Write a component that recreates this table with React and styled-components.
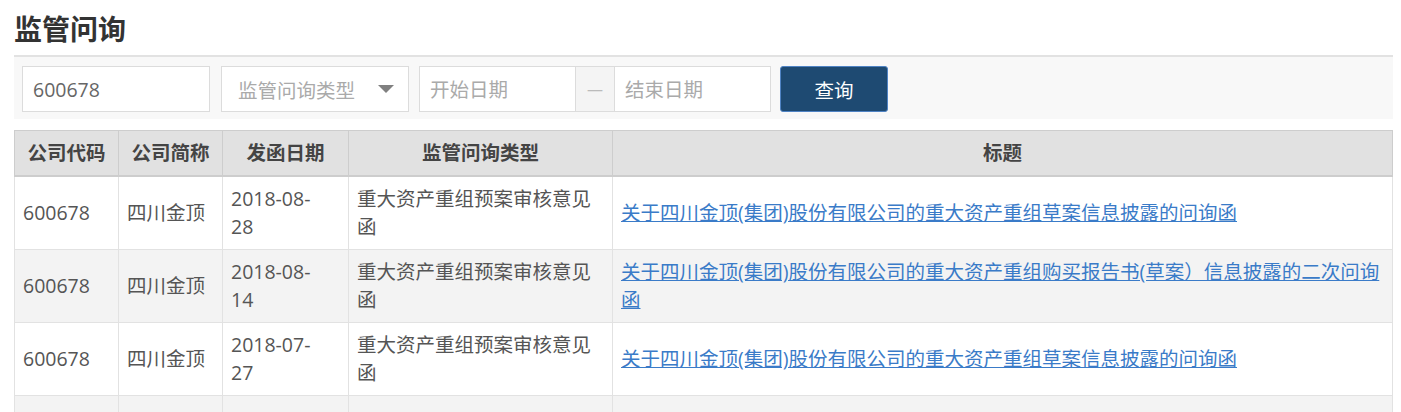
import React from 'react';
import styled, { createGlobalStyle } from 'styled-components';

const GlobalStyle = createGlobalStyle`
    body {
        margin: 0;
        background: #fff;
        font-family: "Open Sans", "Noto Sans CJK SC", sans-serif;
        color: #555;
    }
`;

const Page = styled.div`
    margin: 0 8px 0 14px;
`;

const Title = styled.h2`
    margin: 0;
    padding-top: 10px;
    height: 45px;
    line-height: 38px;
    font-size: 28px;
    font-weight: 700;
    color: #333;
`;

const FilterBar = styled.div`
    display: flex;
    align-items: center;
    border-top: 2px solid #e2e2e2;
    background-color: #f8f8f8;
    padding: 9px 8px 7px;
`;

const TextInput = styled.input`
    box-sizing: border-box;
    width: ${({ w }) => w}px;
    height: 46px;
    margin-right: ${({ gap }) => gap || 0}px;
    padding: 0 10px;
    border: 1px solid #dcdcdc;
    background: #fff;
    font-family: inherit;
    font-size: 19.5px;
    color: #666;
    outline: none;

    &::placeholder {
        color: #aaa;
    }
`;

const SelectBox = styled.div`
    box-sizing: border-box;
    width: 188px;
    height: 46px;
    margin-right: 10px;
    padding: 0 14px 0 16px;
    display: flex;
    align-items: center;
    justify-content: space-between;
    border: 1px solid #dcdcdc;
    background: #fff;
    font-size: 19.5px;
    color: #aaa;
`;

const Caret = styled.span`
    width: 0;
    height: 0;
    border-left: 8px solid transparent;
    border-right: 8px solid transparent;
    border-top: 8px solid #808080;
`;

const DateGroup = styled.div`
    display: flex;
    margin-right: 9px;
`;

const DateSep = styled.span`
    box-sizing: border-box;
    width: 38px;
    height: 46px;
    display: flex;
    align-items: center;
    justify-content: center;
    border-top: 1px solid #dcdcdc;
    border-bottom: 1px solid #dcdcdc;
    background: #f4f4f4;
    font-size: 16px;
    color: #bbb;
`;

const SearchButton = styled.button`
    box-sizing: border-box;
    width: 108px;
    height: 46px;
    border: 1px solid #4f83c4;
    border-radius: 3px;
    background-color: #1e4a72;
    color: #fff;
    font-family: inherit;
    font-size: 19.5px;
    cursor: pointer;
`;

const Table = styled.table`
    width: 100%;
    margin-top: 11px;
    border-collapse: collapse;
    table-layout: fixed;
    font-size: 19.5px;
    line-height: 28px;
`;

const Th = styled.th`
    width: ${({ w }) => (w ? `${w}px` : 'auto')};
    padding: 8px;
    background-color: #e1e1e1;
    border: 1px solid #cdcdcd;
    border-bottom-width: 2px;
    font-weight: 700;
    color: #444;
    text-align: center;
`;

const Tr = styled.tr`
    background-color: ${({ striped }) => (striped ? '#f3f3f3' : '#fff')};
`;

const Td = styled.td`
    padding: 8px;
    height: 56px;
    border: 1px solid #e2e2e2;
    vertical-align: middle;
    color: #555;
`;

const DateText = styled.span`
    display: inline-block;
    max-width: 86px;
`;

const TitleLink = styled.a`
    color: #3a7bc8;
    text-decoration: underline;
    cursor: pointer;
`;

const rows = [
    {
        code: '600678',
        name: '四川金顶',
        date: '2018-08-28',
        type: '重大资产重组预案审核意见函',
        title: '关于四川金顶(集团)股份有限公司的重大资产重组草案信息披露的问询函',
    },
    {
        code: '600678',
        name: '四川金顶',
        date: '2018-08-14',
        type: '重大资产重组预案审核意见函',
        title: '关于四川金顶(集团)股份有限公司的重大资产重组购买报告书(草案）信息披露的二次问询函',
    },
    {
        code: '600678',
        name: '四川金顶',
        date: '2018-07-27',
        type: '重大资产重组预案审核意见函',
        title: '关于四川金顶(集团)股份有限公司的重大资产重组草案信息披露的问询函',
    },
];

export default function App() {
    return (
        <Page>
            <GlobalStyle />
            <Title>监管问询</Title>
            <FilterBar>
                <TextInput w={188} gap={11} defaultValue="600678" />
                <SelectBox>
                    <span>监管问询类型</span>
                    <Caret />
                </SelectBox>
                <DateGroup>
                    <TextInput w={157} placeholder="开始日期" />
                    <DateSep>—</DateSep>
                    <TextInput w={157} placeholder="结束日期" />
                </DateGroup>
                <SearchButton>查询</SearchButton>
            </FilterBar>
            <Table>
                <thead>
                    <tr>
                        <Th w={87}>公司代码</Th>
                        <Th w={87}>公司简称</Th>
                        <Th w={109}>发函日期</Th>
                        <Th w={247}>监管问询类型</Th>
                        <Th>标题</Th>
                    </tr>
                </thead>
                <tbody>
                    {rows.map((row, i) => (
                        <Tr key={i} striped={i % 2 === 1}>
                            <Td>{row.code}</Td>
                            <Td>{row.name}</Td>
                            <Td><DateText>{row.date}</DateText></Td>
                            <Td>{row.type}</Td>
                            <Td><TitleLink>{row.title}</TitleLink></Td>
                        </Tr>
                    ))}
                    <Tr striped>
                        <Td />
                        <Td />
                        <Td />
                        <Td />
                        <Td />
                    </Tr>
                </tbody>
            </Table>
        </Page>
    );
}
